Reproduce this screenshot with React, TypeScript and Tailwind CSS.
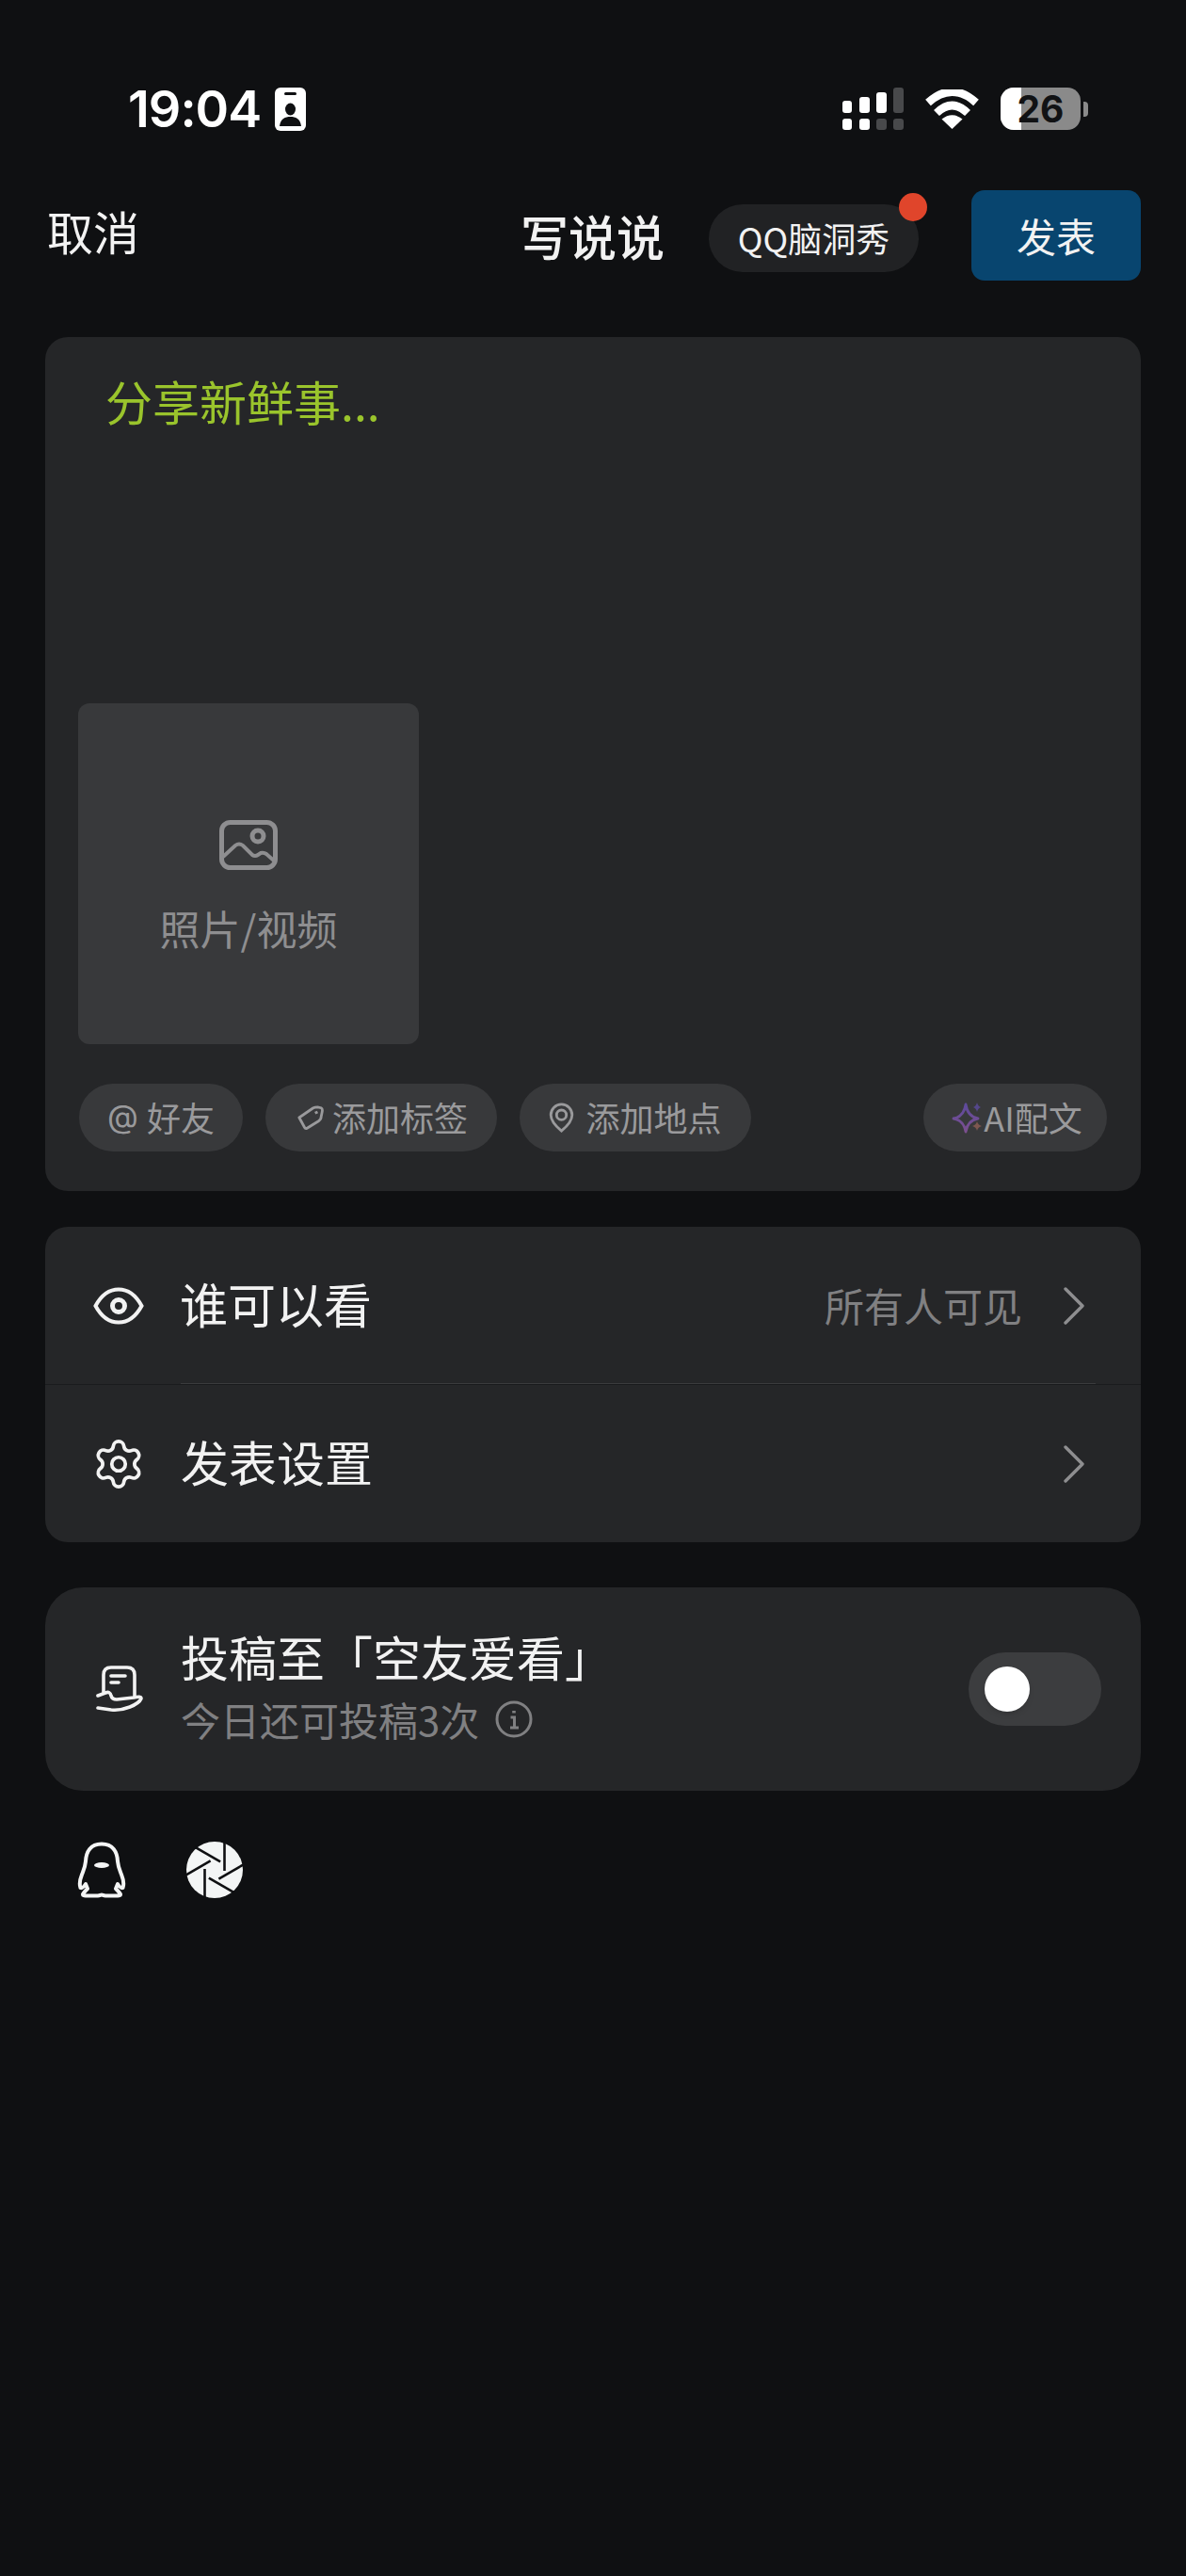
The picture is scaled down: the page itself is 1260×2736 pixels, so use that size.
import { Settings } from 'lucide-react';

const cjk = { fontFamily: '"Noto Sans CJK SC", "Noto Sans", sans-serif' };

const Signal = () => (
  <svg width="65" height="45" viewBox="0 0 65 45">
    <rect x="0" y="14" width="10" height="13" rx="3" fill="#fff" />
    <rect x="18" y="10" width="11" height="17" rx="3" fill="#fff" />
    <rect x="36" y="5" width="11" height="22" rx="3" fill="#fff" />
    <rect x="54" y="0" width="11" height="27" rx="3" fill="#48494b" />
    <rect x="0" y="33" width="10" height="12" rx="3" fill="#fff" />
    <rect x="18" y="33" width="11" height="12" rx="3" fill="#fff" />
    <rect x="36" y="33" width="11" height="12" rx="3" fill="#48494b" />
    <rect x="54" y="33" width="11" height="12" rx="3" fill="#48494b" />
  </svg>
);

const Wifi = () => (
  <svg width="57" height="42" viewBox="0 0 57 42" fill="none">
    <path d="M3 14 Q28.5 -9 54 14" stroke="#fff" strokeWidth="8.5" />
    <path d="M12 25 Q28.5 9 45 25" stroke="#fff" strokeWidth="8.5" />
    <path d="M28.5 42 L17.5 31.5 Q28.5 23 39.5 31.5 Z" fill="#fff" />
  </svg>
);

const Chevron = () => (
  <svg width="22" height="40" viewBox="0 0 22 40" fill="none" stroke="#8e8e90" strokeWidth="3.4" strokeLinecap="round" strokeLinejoin="round">
    <path d="M2 2 L20 20 L2 38" />
  </svg>
);

const Aperture = () => (
  <svg width="60" height="60" viewBox="0 0 60 60">
    <circle cx="30" cy="30" r="30" fill="#f3f5f5" />
    {[0, 60, 120, 180, 240, 300].map((a) => (
      <path key={a} d="M40.5 0 V31" stroke="#0f1012" strokeWidth="2.6" transform={`rotate(${a} 30 30)`} />
    ))}
  </svg>
);

const Chip = ({ className, children }: { className: string; children: React.ReactNode }) => (
  <div className={`h-[72px] rounded-full bg-[#38393b] flex items-center justify-center text-[36px] text-[#9a9a9c] ${className}`}>
    {children}
  </div>
);

const ChipText = ({ children }: { children: React.ReactNode }) => (
  <span className="leading-none -mt-[3px]">{children}</span>
);

export default function App() {
  return (
    <div className="w-[1260px] h-[2736px] bg-[#0f1012] text-[#f2f2f2] overflow-hidden" style={cjk}>
      {/* status bar */}
      <div className="pt-[92px] pl-[136px] pr-[104px] h-[139px] flex items-center justify-between">
        <div className="flex items-center gap-[15px]">
          <span className="font-['Inter'] font-semibold text-[54px] leading-none text-white tracking-[-1px]">19:04</span>
          <svg width="33" height="46" viewBox="0 0 33 46">
            <rect width="33" height="46" rx="6" fill="#fff" />
            <rect x="10" y="5" width="13" height="3" rx="1.5" fill="#0f1012" />
            <ellipse cx="16.5" cy="23" rx="5.5" ry="6.5" fill="#0f1012" />
            <path d="M5 41 C6 33 11 31 16.5 31 C22 31 27 33 28 41 Z" fill="#0f1012" />
          </svg>
        </div>
        <div className="flex items-center">
          <Signal />
          <div className="ml-[23px]"><Wifi /></div>
          <div className="ml-[23px] flex items-center">
            <div className="relative w-[85px] h-[45px] rounded-[14px] overflow-hidden bg-[#8a8a8a] flex">
              <div className="w-[22px] bg-white"></div>
              <span className="absolute inset-0 flex items-center justify-center font-['Inter'] font-bold text-[39px] leading-none text-[#111214]">26</span>
            </div>
            <div className="ml-[3px] w-[5px] h-[16px] rounded-r-[4px] bg-[#8a8a8a]"></div>
          </div>
        </div>
      </div>

      {/* header */}
      <div className="mt-[63px] h-[96px] pl-[50px] pr-[48px] flex items-center">
        <span className="mr-auto -mt-[12px] text-[49px] leading-none">取消</span>
        <span className="text-[51px] leading-none font-medium">写说说</span>
        <div className="relative ml-[47px] w-[223px] h-[72px] mt-[6px] rounded-full bg-[#212224] flex items-center justify-center text-[36px] leading-none">
          <span className="-mt-[3px]">QQ脑洞秀</span>
          <span className="absolute -top-[12px] right-[-9px] w-[30px] h-[30px] rounded-full bg-[#e0452b]"></span>
        </div>
        <div className="ml-[56px] w-[180px] h-[96px] rounded-[14px] bg-[#08456f] flex items-center justify-center text-[42px] leading-none">发表</div>
      </div>

      <div className="px-[48px]">
        {/* editor card */}
        <div className="mt-[60px] h-[907px] rounded-[24px] bg-[#252628] pl-[35px] pr-[36px] flex flex-col">
          <div className="h-[389px] pl-[29px] pt-[37px] text-[50px] leading-[60px] text-[#9ac42c]">分享新鲜事...</div>
          <div className="w-[362px] h-[362px] rounded-[12px] bg-[#38393b] flex flex-col items-center pt-[124px] text-[#8e8e90]">
            <svg width="62" height="53" viewBox="0 0 62 53" fill="none" stroke="#8e8e90" strokeWidth="5">
              <rect x="2.5" y="2.5" width="57" height="48" rx="9" />
              <circle cx="41" cy="17" r="6" />
              <path d="M4 39 L17 27 Q21 24 25 27 L35 37 Q38 39 41 37 L44 35 Q47 34 50 36 L59 44" strokeWidth="4" />
            </svg>
            <span className="mt-[33px] text-[43px] leading-[56px]">照片/视频</span>
          </div>
          <div className="mt-[42px] pl-[1px] flex items-center gap-[24px]">
            <Chip className="w-[174px] gap-[9px]">
              <span className="font-['Inter'] text-[34px] leading-none -mt-[3px]">@</span>
              <ChipText>好友</ChipText>
            </Chip>
            <Chip className="w-[246px] gap-[9px] pl-[3px]">
              <svg width="28" height="28" viewBox="0 0 30 30" fill="none" stroke="#9a9a9c" strokeWidth="3" strokeLinejoin="round">
                <path d="M2 15 L18 4 Q20 3 23 3 L27 4 Q29 5 28 9 L27 14 Q27 17 24 19 L11 27 Q9 28 8 26 Z" />
                <path d="M20 10 L23 8.5" />
              </svg>
              <ChipText>添加标签</ChipText>
            </Chip>
            <Chip className="w-[246px] gap-[12px]">
              <svg width="27" height="32" viewBox="0 0 28 34" fill="none" stroke="#9a9a9c" strokeWidth="3">
                <path d="M14 32 C8 27 2 21 2 14 A12 12 0 0 1 26 14 C26 21 20 27 14 32 Z" />
                <circle cx="14" cy="14" r="5.5" />
              </svg>
              <ChipText>添加地点</ChipText>
            </Chip>
            <Chip className="ml-auto w-[195px] pl-[4px]">
              <svg width="34" height="34" viewBox="0 0 34 34" fill="none">
                <defs>
                  <linearGradient id="spark" x1="0" y1="0" x2="0" y2="1">
                    <stop offset="0" stopColor="#5d4a9c" />
                    <stop offset="1" stopColor="#7c4f8f" />
                  </linearGradient>
                </defs>
                <path d="M15 3 Q17 16 28 18 Q17 20 15 32 Q13 20 2 18 Q13 16 15 3 Z" stroke="url(#spark)" strokeWidth="2.8" strokeLinejoin="round" />
                <path d="M27 1 Q28 5 31 6 Q28 7 27 11 Q26 7 23 6 Q26 5 27 1 Z" fill="#54478a" />
                <path d="M27 21 Q28 25 32 26 Q28 27 27 31 Q26 27 22 26 Q26 25 27 21 Z" fill="#7d5750" />
              </svg>
              <ChipText>AI配文</ChipText>
            </Chip>
          </div>
        </div>

        {/* who can see / settings */}
        <div className="mt-[38px] rounded-[24px] bg-[#252628] overflow-hidden">
          <div className="h-[167px] pl-[51px] pr-[60px] flex items-center">
            <svg width="54" height="40" viewBox="0 0 54 40" fill="none" stroke="#f2f2f2" strokeWidth="4">
              <path d="M2.5 20 C9 8 17 2.5 27 2.5 C37 2.5 45 8 51.5 20 C45 32 37 37.5 27 37.5 C17 37.5 9 32 2.5 20 Z" />
              <circle cx="27" cy="20" r="6.5" strokeWidth="5" />
            </svg>
            <span className="ml-[38px] -mt-[4px] text-[51px] leading-none">谁可以看</span>
            <span className="ml-auto -mt-[2px] text-[42px] leading-none text-[#808082]">所有人可见</span>
            <div className="ml-[44px]"><Chevron /></div>
          </div>
          <div className="relative h-[1px] bg-[#1a1b1d]">
            <div className="absolute -top-[1px] left-[144px] right-[48px] h-[1px] bg-[#3a3b3d]"></div>
          </div>
          <div className="h-[167px] pl-[49px] pr-[60px] flex items-center">
            <Settings size={58} strokeWidth={1.55} color="#f2f2f2" />
            <span className="ml-[37px] -mt-[4px] text-[51px] leading-none">发表设置</span>
            <div className="ml-auto"><Chevron /></div>
          </div>
        </div>

        {/* submit card */}
        <div className="mt-[48px] h-[216px] rounded-[40px] bg-[#252628] pl-[54px] pr-[42px] flex items-center">
          <svg width="50" height="50" viewBox="12 10 50 50" fill="none" stroke="#f2f2f2" strokeWidth="3.6" strokeLinecap="round" strokeLinejoin="round">
            <path d="M20 38 V20 Q20 12 28 12 L45 12 Q53 12 53 20 V43" />
            <path d="M28 21 H43 M28 28 H36" />
            <path d="M14 42 L22 39 Q27 37 28 42 Q29 46 34 46 L52 44 Q60 42 60 45 Q58 50 48 54 Q38 58 28 57 L14 55" />
          </svg>
          <div className="ml-[40px] -mt-[8px] flex flex-col">
            <span className="text-[51px] leading-[58px]">投稿至「空友爱看」</span>
            <div className="mt-[13px] flex items-center text-[#808082]">
              <span className="text-[42px] leading-[50px]">今日还可投稿3次</span>
              <svg className="ml-[17px]" width="40" height="40" viewBox="0 0 40 40" fill="none" stroke="#808082" strokeWidth="3">
                <circle cx="20" cy="20" r="18" />
                <path d="M20 11 V13.5" strokeWidth="3.6" />
                <path d="M16.5 18 H20.5 V29 M16 29 H25" />
              </svg>
            </div>
          </div>
          <div className="ml-auto w-[141px] h-[78px] rounded-full bg-[#3c3d3f] flex items-center pl-[17px]">
            <div className="w-[48px] h-[48px] rounded-full bg-white shadow-md"></div>
          </div>
        </div>
      </div>

      {/* sync targets */}
      <div className="mt-[54px] pl-[82px] flex items-center gap-[64px]">
        <svg width="52" height="60" viewBox="0 0 52 60" fill="none" stroke="#f4f5f5" strokeWidth="4" strokeLinejoin="round">
          <path d="M26 2.5 C14 2.5 9.5 11 9 21 C8.5 27 7 30 5 35 C3 40 2 45 3.5 49 C5.5 50 7 48 9 45 L11 50 C9 52 7 54 6 56 C6 57.5 8 57.5 12 57.5 L22 57.5 C24 57.5 25 56.5 26 56.5 C27 56.5 28 57.5 30 57.5 L40 57.5 C44 57.5 46 57.5 46 56 C45 54 43 52 41 50 L43 45 C45 48 46.5 50 48.5 49 C50 45 49 40 47 35 C45 30 43.5 27 43 21 C42.5 11 38 2.5 26 2.5 Z" />
          <ellipse cx="26" cy="25" rx="8" ry="3" fill="#f4f5f5" stroke="none" />
        </svg>
        <Aperture />
      </div>
    </div>
  );
}
